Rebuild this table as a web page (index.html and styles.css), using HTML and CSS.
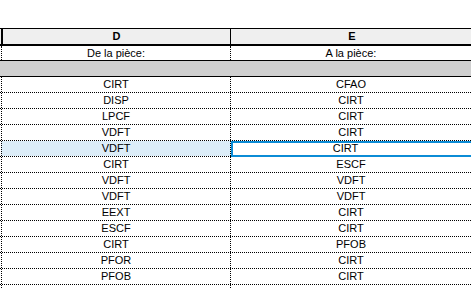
FILE: index.html
```html
<!DOCTYPE html>
<html>
<head>
<meta charset="utf-8">
<link rel="stylesheet" href="styles.css">
</head>
<body>
<div class="sheet">
  <div class="hdr">
    <div class="hcell col-d">D</div>
    <div class="hcell col-e">E</div>
  </div>
  <div class="row sub">
    <div class="cell col-d">De la pièce:</div>
    <div class="cell col-e">A la pièce:</div>
  </div>
  <div class="band"></div>
  <div class="row"><div class="cell col-d">CIRT</div><div class="cell col-e">CFAO</div></div>
  <div class="row"><div class="cell col-d">DISP</div><div class="cell col-e">CIRT</div></div>
  <div class="row"><div class="cell col-d">LPCF</div><div class="cell col-e">CIRT</div></div>
  <div class="row"><div class="cell col-d">VDFT</div><div class="cell col-e">CIRT</div></div>
  <div class="row"><div class="cell col-d hl">VDFT</div><div class="cell col-e sel">CIRT</div></div>
  <div class="row"><div class="cell col-d">CIRT</div><div class="cell col-e">ESCF</div></div>
  <div class="row"><div class="cell col-d">VDFT</div><div class="cell col-e">VDFT</div></div>
  <div class="row"><div class="cell col-d">VDFT</div><div class="cell col-e">VDFT</div></div>
  <div class="row"><div class="cell col-d">EEXT</div><div class="cell col-e">CIRT</div></div>
  <div class="row"><div class="cell col-d">ESCF</div><div class="cell col-e">CIRT</div></div>
  <div class="row"><div class="cell col-d">CIRT</div><div class="cell col-e">PFOB</div></div>
  <div class="row"><div class="cell col-d">PFOR</div><div class="cell col-e">CIRT</div></div>
  <div class="row"><div class="cell col-d">PFOB</div><div class="cell col-e">CIRT</div></div>
  <div class="row"><div class="cell col-d"></div><div class="cell col-e"></div></div>
</div>
</body>
</html>
```
FILE: styles.css
```css
html, body {
  margin: 0;
  padding: 0;
  background: #fff;
  overflow: hidden;
}
body {
  padding-top: 28px;
  font-family: "Liberation Sans", Arial, sans-serif;
  font-size: 11px;
  color: #000;
}
.sheet {
  width: 471px;
  overflow: hidden;
}
.hdr {
  display: grid;
  grid-template-columns: 231px 1fr;
  border-top: 1px solid #000;
  border-bottom: 2px solid #000;
  background: #efefef;
}
.hcell {
  height: 15px;
  line-height: 15px;
  text-align: center;
  font-weight: bold;
  box-sizing: border-box;
}
.hdr .col-d {
  margin-left: 1px;
  border-left: 2px solid #000;
  border-right: 1px solid #000;
}
.hdr .col-e {
  padding-left: 2px;
}
.row {
  display: grid;
  grid-template-columns: 231px 1fr;
  border-bottom: 1px dotted #000;
}
.row.sub {
  border-bottom: none;
}
.cell {
  height: 15px;
  line-height: 15px;
  text-align: center;
  box-sizing: border-box;
}
.sub .cell {
  height: 14px;
  line-height: 14px;
}
.row .col-d {
  margin-left: 1px;
  border-left: 1px dotted #000;
  border-right: 1px dotted #000;
}
.band {
  height: 15px;
  background: #d0d0d0;
  border-top: 1px solid #000;
  border-bottom: 1px solid #000;
}
.hl {
  background: #dcedf8;
}
.sel {
  position: relative;
  padding-right: 11px;
}
.sel::after {
  content: "";
  position: absolute;
  top: 0;
  left: 0;
  right: -3px;
  bottom: -1px;
  border: 2px solid #0b8cd6;
}
```
